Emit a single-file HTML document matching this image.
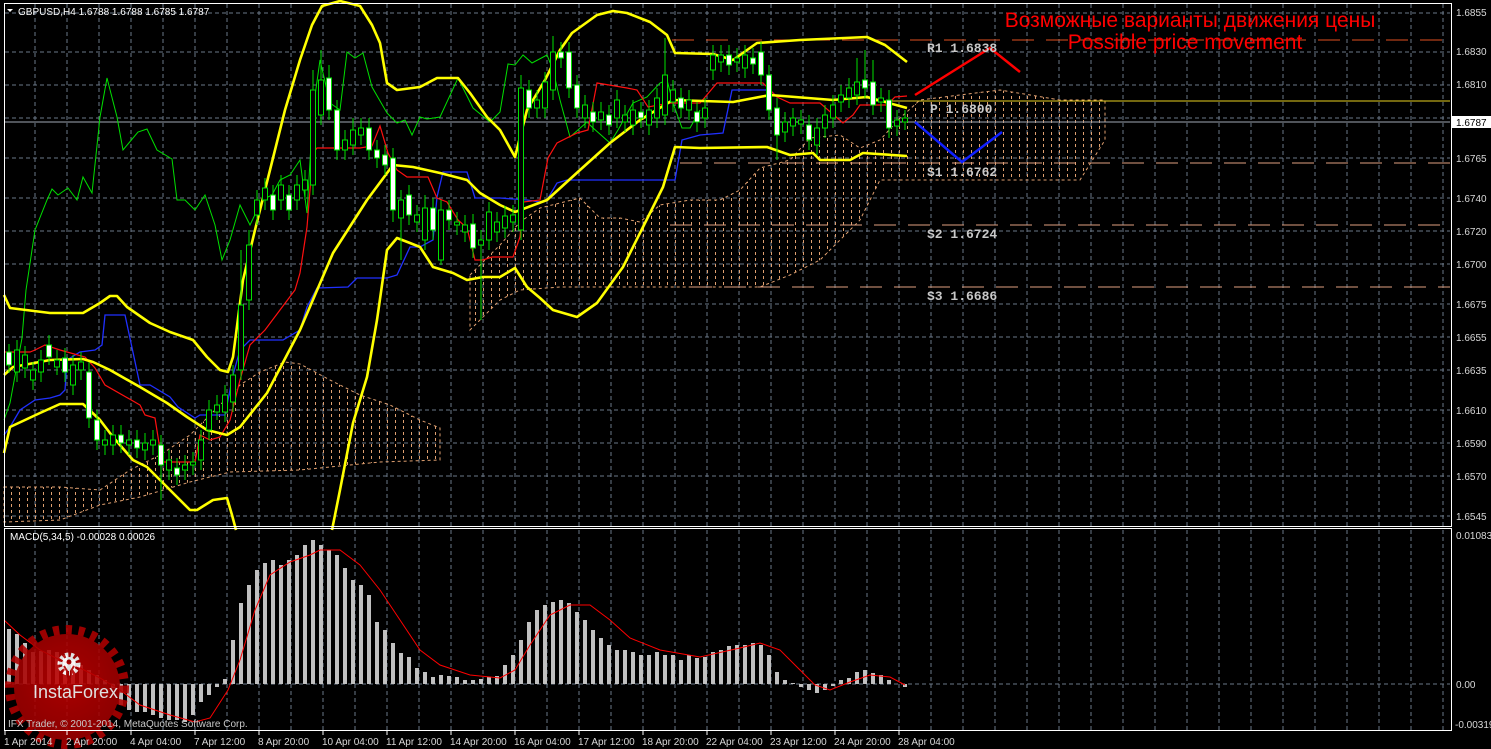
<!DOCTYPE html>
<html><head><meta charset="utf-8"><style>
html,body{margin:0;padding:0;background:#000;}
svg{display:block}
text{font-family:"Liberation Sans",sans-serif;}
</style></head><body>
<svg width="1491" height="749" viewBox="0 0 1491 749" xmlns="http://www.w3.org/2000/svg">
<defs>
<pattern id="cl" width="8" height="6" patternUnits="userSpaceOnUse">
<line x1="3.5" y1="0" x2="3.5" y2="3" stroke="#e0a070" stroke-width="1"/>
</pattern>
<radialGradient id="rg" cx="50%" cy="45%" r="55%"><stop offset="0" stop-color="#c00000"/><stop offset="1" stop-color="#a00000"/></radialGradient>
</defs>
<rect width="1491" height="749" fill="#000"/>
<g stroke="#6a7888" stroke-width="1" stroke-dasharray="4,3">
<path d="M35 4V526M67 4V526M99 4V526M131 4V526M163 4V526M195 4V526M227 4V526M259 4V526M291 4V526M323 4V526M355 4V526M387 4V526M419 4V526M451 4V526M483 4V526M515 4V526M547 4V526M579 4V526M611 4V526M643 4V526M675 4V526M707 4V526M739 4V526M771 4V526M803 4V526M835 4V526M867 4V526M899 4V526M931 4V526M963 4V526M995 4V526M1027 4V526M1059 4V526M1091 4V526M1123 4V526M1155 4V526M1187 4V526M1219 4V526M1251 4V526M1283 4V526M1315 4V526M1347 4V526M1379 4V526M1411 4V526M1443 4V526"/>
<path d="M35 530V730M67 530V730M99 530V730M131 530V730M163 530V730M195 530V730M227 530V730M259 530V730M291 530V730M323 530V730M355 530V730M387 530V730M419 530V730M451 530V730M483 530V730M515 530V730M547 530V730M579 530V730M611 530V730M643 530V730M675 530V730M707 530V730M739 530V730M771 530V730M803 530V730M835 530V730M867 530V730M899 530V730M931 530V730M963 530V730M995 530V730M1027 530V730M1059 530V730M1091 530V730M1123 530V730M1155 530V730M1187 530V730M1219 530V730M1251 530V730M1283 530V730M1315 530V730M1347 530V730M1379 530V730M1411 530V730M1443 530V730"/>
<path d="M5 13H1450M5 52H1450M5 85H1450M5 118H1450M5 158H1450M5 198H1450M5 231H1450M5 264H1450M5 304H1450M5 337H1450M5 370H1450M5 410H1450M5 443H1450M5 476H1450M5 516H1450M5 684H1450"/>
</g>
<g fill="url(#cl)" stroke="#e0a070" stroke-width="1" stroke-dasharray="3,3">
<polygon points="4,487 60,487 100,490 130,470 160,455 190,435 220,405 240,385 260,372 285,362 300,364 330,380 360,395 390,405 420,420 440,428 440,460 380,462 300,470 230,472 190,482 140,497 100,505 60,520 4,522"/>
<polygon points="470,275 500,245 520,222 540,208 580,198 600,218 620,218 640,222 660,205 690,200 720,200 740,190 760,168 790,160 810,138 840,135 860,148 880,140 900,118 920,100 960,95 1000,90 1060,100 1105,100 1105,140 1080,180 920,180 880,180 860,220 820,260 790,275 760,287 640,287 560,287 520,290 500,300 470,330"/>
</g>
<path d="M672 40H1450" stroke="#e05020" stroke-dasharray="22,12"/>
<path d="M680 163H1450M670 225H1450M690 287H1450" stroke="#e0a080" stroke-dasharray="22,12"/>
<path d="M870 101H1450" stroke="#e8d020"/>
<path d="M5 122H1450" stroke="#a0a8b4"/>
<polyline fill="none" stroke="#00e000" stroke-width="1" points="4,420 10,403 22,338 26,290 35,230 47,200 52,189 58,195 68,188 77,200 83,177 92,193 100,117 107,78 117,117 123,150 138,132 147,129 157,150 172,159 177,200 185,200 195,210 205,195 215,225 222,260 230,240 240,205 250,225 262,200 272,195 280,180 290,175 300,160 307,213 313,110 320,60 330,103 340,110 347,52 355,58 363,53 372,87 387,113 397,123 405,120 412,135 420,117 427,119 440,117 458,78 473,108 490,122 500,112 508,64 515,65 523,55 532,63 547,55 553,70 560,100 570,137 587,122 592,127 610,143 618,130 633,103 647,97 660,83 667,80 673,103 682,128 690,128 700,110"/>
<polyline fill="none" stroke="#2030ff" stroke-width="1.3" points="4,435 10,427 20,410 35,400 50,398 60,395 65,390 67,360 80,352 95,350 102,345 105,315 125,315 140,385 150,385 170,397 178,407 195,418 200,415 225,415 227,405 233,375 240,350 250,340 283,340 300,330 307,307 317,288 348,287 357,278 387,278 397,275 410,247 420,247 433,240 437,197 443,172 467,172 475,198 500,198 527,200 540,202 547,200 557,183 567,180 675,180 682,140 700,135 723,133 732,90 770,90 777,97"/>
<polyline fill="none" stroke="#ff1010" stroke-width="1.2" points="4,352 30,352 35,350 45,345 60,350 85,357 95,368 105,385 140,405 145,415 155,418 162,462 195,462 200,435 210,440 220,437 230,420 240,380 250,345 265,330 280,310 295,290 300,273 307,227 313,153 317,148 360,148 372,146 380,126 388,153 397,170 407,177 428,177 437,198 447,202 458,220 467,228 475,260 483,260 492,257 513,257 520,237 523,202 540,200 548,158 557,143 577,133 588,130 597,83 627,88 637,90 648,107 670,103 700,103 717,83 763,83 777,97 790,103 820,103 843,123 853,115 860,105 887,105 895,97 907,96"/>
<g fill="none" stroke="#ffff00" stroke-width="2.6" stroke-linejoin="round">
<polyline points="4,295 10,308 50,313 83,313 100,303 110,296 117,296 127,307 150,323 170,332 193,340 207,357 220,370 228,372 233,357 243,280 255,230 270,170 285,110 300,60 312,25 322,6 340,1 360,6 372,25 380,43 387,83 397,90 420,87 437,78 458,78 470,93 487,117 500,130 515,157 527,110 545,80 560,50 572,33 597,15 613,11 627,13 650,22 667,35 675,53 713,54 733,60 757,43 800,40 867,37 885,45 907,62"/>
<polyline points="4,375 13,367 50,360 83,359 93,362 110,370 140,387 167,403 187,417 207,430 227,435 240,427 267,393 300,330 333,253 367,200 393,165 413,167 440,173 467,180 480,193 500,205 515,212 547,200 580,170 610,143 640,120 673,100 733,102 770,95 833,100 867,97 907,108"/>
<polyline points="4,453 10,427 40,413 60,404 83,404 100,420 113,437 133,460 147,467 160,480 173,493 190,510 197,510 213,500 227,498 232,515 236,530"/>
<polyline points="332,530 340,490 353,423 367,377 377,320 387,250 397,238 410,243 420,247 433,267 453,273 467,280 483,277 500,277 515,268 527,287 540,298 553,310 577,317 597,303 623,267 643,227 663,187 675,147 700,148 767,147 790,155 813,153 820,160 850,160 863,153 907,156"/>
</g>
<path stroke="#00e000" stroke-width="1" fill="none" d="M9 344V373M17 340V382M25 346V378M33 362V390M41 350V382M49 335V365M57 350V375M65 348V382M73 355V395M81 352V380M89 362V428M97 410V450M105 430V455M113 425V455M121 425V453M129 430V455M137 430V458M145 433V460M153 430V455M161 435V500M169 450V480M177 458V485M185 455V480M193 452V475M201 430V470M209 400V440M217 395V420M225 385V422M233 365V412M241 250V380M249 230V310M257 190V225M265 178V210M273 185V220M281 175V210M289 185V220M297 175V210M305 170V200M313 70V195M321 50V125M329 65V120M337 100V160M345 130V160M353 118V155M361 118V145M369 118V160M377 140V168M385 145V175M393 148V222M401 190V260M409 185V225M417 205V232M425 195V250M433 198V240M441 200V265M449 200V230M457 212V235M465 215V242M473 214V258M481 230V320M489 202V250M497 212V242M505 206V238M513 205V232M521 75V240M529 80V118M537 90V118M545 72V118M553 36V100M561 42V68M569 42V98M577 75V118M585 95V128M593 102V132M601 102V130M609 105V135M617 90V128M625 105V132M633 100V135M641 102V128M649 100V135M657 88V128M665 38V125M673 80V112M681 88V118M689 90V120M697 102V132M705 98V128M713 45V80M721 45V72M729 45V75M737 48V72M745 45V78M753 48V74M761 42V85M769 65V120M777 98V160M785 112V142M793 108V136M801 110V134M809 115V150M817 118V155M825 105V138M833 95V128M841 85V112M849 78V108M857 58V105M865 50V98M873 60V115M881 88V112M889 90V138M897 110V136M905 110V130"/>
<g stroke="#00e000" stroke-width="1">
<g fill="#fff">
<rect x="6.5" y="352" width="5" height="13"/><rect x="46.5" y="345" width="5" height="12"/><rect x="62.5" y="358" width="5" height="14"/><rect x="86.5" y="372" width="5" height="46"/><rect x="94.5" y="420" width="5" height="20"/><rect x="118.5" y="435" width="5" height="8"/><rect x="134.5" y="440" width="5" height="8"/><rect x="158.5" y="445" width="5" height="20"/><rect x="174.5" y="468" width="5" height="7"/><rect x="270.5" y="195" width="5" height="15"/><rect x="286.5" y="195" width="5" height="15"/><rect x="326.5" y="78" width="5" height="32"/><rect x="334.5" y="110" width="5" height="40"/><rect x="366.5" y="128" width="5" height="22"/><rect x="374.5" y="150" width="5" height="8"/><rect x="382.5" y="155" width="5" height="10"/><rect x="390.5" y="158" width="5" height="52"/><rect x="406.5" y="195" width="5" height="20"/><rect x="430.5" y="208" width="5" height="22"/><rect x="446.5" y="210" width="5" height="10"/><rect x="470.5" y="224" width="5" height="24"/><rect x="526.5" y="90" width="5" height="18"/><rect x="558.5" y="52" width="5" height="6"/><rect x="566.5" y="52" width="5" height="36"/><rect x="574.5" y="85" width="5" height="23"/><rect x="590.5" y="112" width="5" height="10"/><rect x="606.5" y="115" width="5" height="10"/><rect x="638.5" y="112" width="5" height="6"/><rect x="678.5" y="98" width="5" height="10"/><rect x="694.5" y="112" width="5" height="10"/><rect x="726.5" y="55" width="5" height="10"/><rect x="750.5" y="58" width="5" height="6"/><rect x="758.5" y="52" width="5" height="23"/><rect x="766.5" y="75" width="5" height="35"/><rect x="774.5" y="108" width="5" height="27"/><rect x="806.5" y="125" width="5" height="15"/><rect x="862.5" y="80" width="5" height="8"/><rect x="870.5" y="82" width="5" height="23"/><rect x="886.5" y="100" width="5" height="28"/>
</g>
<g fill="#000">
<rect x="14.5" y="350" width="5" height="22"/><rect x="22.5" y="355" width="5" height="13"/><rect x="30.5" y="370" width="5" height="10"/><rect x="38.5" y="360" width="5" height="12"/><rect x="54.5" y="360" width="5" height="7"/><rect x="70.5" y="365" width="5" height="20"/><rect x="78.5" y="362" width="5" height="8"/><rect x="102.5" y="440" width="5" height="5"/><rect x="110.5" y="435" width="5" height="10"/><rect x="126.5" y="440" width="5" height="5"/><rect x="142.5" y="443" width="5" height="7"/><rect x="150.5" y="440" width="5" height="5"/><rect x="166.5" y="460" width="5" height="10"/><rect x="182.5" y="465" width="5" height="5"/><rect x="190.5" y="462" width="5" height="3"/><rect x="198.5" y="440" width="5" height="20"/><rect x="206.5" y="410" width="5" height="20"/><rect x="214.5" y="405" width="5" height="7"/><rect x="222.5" y="395" width="5" height="17"/><rect x="230.5" y="375" width="5" height="27"/><rect x="238.5" y="305" width="5" height="65"/><rect x="246.5" y="245" width="5" height="55"/><rect x="254.5" y="200" width="5" height="15"/><rect x="262.5" y="188" width="5" height="12"/><rect x="278.5" y="185" width="5" height="15"/><rect x="294.5" y="185" width="5" height="15"/><rect x="302.5" y="180" width="5" height="10"/><rect x="310.5" y="90" width="5" height="95"/><rect x="318.5" y="80" width="5" height="35"/><rect x="342.5" y="140" width="5" height="10"/><rect x="350.5" y="130" width="5" height="15"/><rect x="358.5" y="128" width="5" height="7"/><rect x="398.5" y="200" width="5" height="18"/><rect x="414.5" y="215" width="5" height="7"/><rect x="422.5" y="208" width="5" height="32"/><rect x="438.5" y="210" width="5" height="50"/><rect x="454.5" y="222" width="5" height="3"/><rect x="462.5" y="225" width="5" height="7"/><rect x="478.5" y="240" width="5" height="5"/><rect x="486.5" y="212" width="5" height="28"/><rect x="494.5" y="222" width="5" height="10"/><rect x="502.5" y="216" width="5" height="12"/><rect x="510.5" y="215" width="5" height="7"/><rect x="518.5" y="88" width="5" height="142"/><rect x="534.5" y="100" width="5" height="8"/><rect x="542.5" y="82" width="5" height="26"/><rect x="550.5" y="52" width="5" height="38"/><rect x="582.5" y="105" width="5" height="13"/><rect x="598.5" y="112" width="5" height="8"/><rect x="614.5" y="100" width="5" height="18"/><rect x="622.5" y="115" width="5" height="7"/><rect x="630.5" y="110" width="5" height="15"/><rect x="646.5" y="110" width="5" height="15"/><rect x="654.5" y="98" width="5" height="20"/><rect x="662.5" y="75" width="5" height="40"/><rect x="670.5" y="90" width="5" height="12"/><rect x="686.5" y="100" width="5" height="10"/><rect x="702.5" y="108" width="5" height="10"/><rect x="710.5" y="55" width="5" height="15"/><rect x="718.5" y="55" width="5" height="7"/><rect x="734.5" y="58" width="5" height="4"/><rect x="742.5" y="55" width="5" height="13"/><rect x="782.5" y="122" width="5" height="10"/><rect x="790.5" y="118" width="5" height="8"/><rect x="798.5" y="120" width="5" height="4"/><rect x="814.5" y="128" width="5" height="17"/><rect x="822.5" y="115" width="5" height="13"/><rect x="830.5" y="105" width="5" height="13"/><rect x="838.5" y="95" width="5" height="7"/><rect x="846.5" y="88" width="5" height="10"/><rect x="854.5" y="82" width="5" height="13"/><rect x="878.5" y="98" width="5" height="4"/><rect x="894.5" y="120" width="5" height="6"/><rect x="902.5" y="118" width="5" height="4"/>
</g></g>
<polyline points="915,95 990,48 1020,72" fill="none" stroke="#ff0000" stroke-width="2.5"/>
<polyline points="915,122 962,162 1002,132" fill="none" stroke="#1020ff" stroke-width="2.5"/>
<g font-size="13" fill="#c8c8c8" font-weight="bold">
<text x="927" y="52" style="font-family:'Liberation Mono',monospace">R1 1.6838</text>
<text x="930" y="113" style="font-family:'Liberation Mono',monospace">P 1.6800</text>
<text x="927" y="176" style="font-family:'Liberation Mono',monospace">S1 1.6762</text>
<text x="927" y="238" style="font-family:'Liberation Mono',monospace">S2 1.6724</text>
<text x="927" y="300" style="font-family:'Liberation Mono',monospace">S3 1.6686</text>
</g>
<text x="1190" y="27" text-anchor="middle" font-size="21" fill="#ff0000">Возможные варианты движения цены</text>
<text x="1185" y="49" text-anchor="middle" font-size="21" fill="#ff0000">Possible price movement</text>
<path stroke="#c0c0c0" stroke-width="4" d="M9 684V629M17 684V634M25 684V643M33 684V652M41 684V651M49 684V650M57 684V652M65 684V655M73 684V660M81 684V665M89 684V670M97 684V675M105 684V680M113 684V688M121 684V705M129 684V710M137 684V712M145 684V712M153 684V715M161 684V718M169 684V720M177 684V720M185 684V722M193 684V715M201 684V702M209 684V695M217 684V687M225 684V679M233 684V640M241 684V603M249 684V585M257 684V570M265 684V563M273 684V560M281 684V565M289 684V560M297 684V555M305 684V545M313 684V540M321 684V545M329 684V550M337 684V555M345 684V568M353 684V580M361 684V585M369 684V595M377 684V622M385 684V630M393 684V643M401 684V653M409 684V657M417 684V668M425 684V672M433 684V677M441 684V675M449 684V676M457 684V677M465 684V680M473 684V680M481 684V679M489 684V677M497 684V676M505 684V665M513 684V655M521 684V640M529 684V622M537 684V610M545 684V605M553 684V602M561 684V600M569 684V603M577 684V612M585 684V620M593 684V630M601 684V638M609 684V645M617 684V650M625 684V650M633 684V652M641 684V655M649 684V655M657 684V652M665 684V655M673 684V655M681 684V660M689 684V655M697 684V658M705 684V657M713 684V652M721 684V650M729 684V646M737 684V645M745 684V645M753 684V643M761 684V645M769 684V655M777 684V672M785 684V680M793 684V683M801 684V687M809 684V690M817 684V693M825 684V690M833 684V686M841 684V680M849 684V678M857 684V672M865 684V670M873 684V673M881 684V675M889 684V680M897 684V684M905 684V687"/>
<polyline fill="none" stroke="#ff0000" stroke-width="1" points="4,620 20,635 40,650 60,660 80,668 100,678 120,690 140,705 170,715 195,722 210,718 228,690 240,660 255,610 270,575 290,562 310,555 320,550 340,550 360,565 380,590 400,620 420,650 440,665 470,675 500,678 515,670 530,645 550,615 570,605 590,605 610,620 630,638 660,650 700,657 740,648 760,643 780,650 800,670 815,685 830,690 850,682 870,675 890,677 905,685"/>
<g opacity="0.88">
<circle cx="67" cy="687" r="56" fill="none" stroke="#b00000" stroke-width="12" stroke-dasharray="6,6.5"/>
<circle cx="67" cy="687" r="53" fill="url(#rg)"/>
<circle cx="69" cy="664" r="9" fill="none" stroke="#fff" stroke-width="5" stroke-dasharray="3,2.5"/>
<circle cx="69" cy="664" r="7" fill="#fff"/>
<circle cx="69" cy="662" r="2.5" fill="#b00000"/>
<path d="M64 666L67 671V678M74 666L71 671V678" stroke="#b00000" stroke-width="2" fill="none"/>
<text x="33" y="698" font-size="18" fill="#fff">InstaForex</text>
</g>
<text x="8" y="727" font-size="10" fill="#c8c8c8">IFX Trader, © 2001-2014, MetaQuotes Software Corp.</text>
<rect x="4.5" y="3.5" width="1447" height="523" fill="none" stroke="#fff"/>
<rect x="4.5" y="528.5" width="1447" height="202" fill="none" stroke="#fff"/>
<polygon points="7,9 13,9 10,12" fill="#fff"/>
<text x="18" y="15" font-size="10" fill="#fff">GBPUSD,H4  1.6788 1.6788 1.6785 1.6787</text>
<text x="10" y="540" font-size="10" fill="#fff">MACD(5,34,5) -0.00028 0.00026</text>
<g font-size="10" fill="#d8d8d8">
<text x="1456" y="16">1.6855</text><text x="1456" y="55">1.6830</text><text x="1456" y="88">1.6810</text>
<text x="1456" y="162">1.6765</text><text x="1456" y="202">1.6740</text><text x="1456" y="235">1.6720</text><text x="1456" y="268">1.6700</text>
<text x="1456" y="308">1.6675</text><text x="1456" y="341">1.6655</text><text x="1456" y="374">1.6635</text><text x="1456" y="414">1.6610</text>
<text x="1456" y="447">1.6590</text><text x="1456" y="480">1.6570</text><text x="1456" y="520">1.6545</text>
<text x="1456" y="539">0.01083</text><text x="1456" y="688">0.00</text><text x="1455" y="728">-0.00319</text>
</g>
<rect x="1452" y="116" width="39" height="12" fill="#fff"/>
<text x="1456" y="126" font-size="10" fill="#000">1.6787</text>
<g font-size="10" fill="#d8d8d8">
<text x="4" y="745">1 Apr 2014</text><text x="66" y="745">2 Apr 20:00</text><text x="130" y="745">4 Apr 04:00</text>
<text x="194" y="745">7 Apr 12:00</text><text x="258" y="745">8 Apr 20:00</text><text x="322" y="745">10 Apr 04:00</text>
<text x="386" y="745">11 Apr 12:00</text><text x="450" y="745">14 Apr 20:00</text><text x="514" y="745">16 Apr 04:00</text>
<text x="578" y="745">17 Apr 12:00</text><text x="642" y="745">18 Apr 20:00</text><text x="706" y="745">22 Apr 04:00</text>
<text x="770" y="745">23 Apr 12:00</text><text x="834" y="745">24 Apr 20:00</text><text x="898" y="745">28 Apr 04:00</text>
</g>
<path stroke="#fff" d="M5 731V735M67 731V735M131 731V735M195 731V735M259 731V735M323 731V735M387 731V735M451 731V735M515 731V735M579 731V735M643 731V735M707 731V735M771 731V735M835 731V735M899 731V735"/>
</svg>
</body></html>
